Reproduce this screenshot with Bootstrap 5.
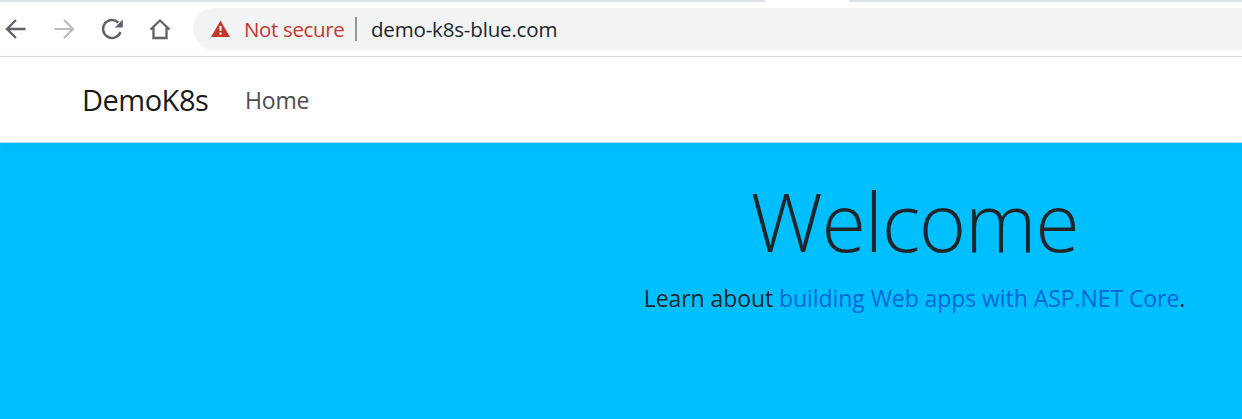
<!DOCTYPE html>
<html lang="en">
<head>
<meta charset="utf-8">
<meta name="viewport" content="width=device-width, initial-scale=1">
<title>Home - DemoK8s</title>
<link href="https://cdn.jsdelivr.net/npm/bootstrap@5.3.0/dist/css/bootstrap.min.css" rel="stylesheet">
<style>
body{font-family:"Open Sans","Noto Sans",sans-serif;background:#00bfff;height:419px;color:#212529}
.tab-strip{height:2px;background:#dee1e6}
.strip-left{width:765px;background:#dee1e6;border-bottom-right-radius:3px}
.strip-gap{width:84px;background:#fff}
.toolbar{height:55px;border-bottom:1px solid #d6d7d9;padding-left:4px}
.tool-icons{width:189px;padding-right:21px}
.address{height:42px;background:#f1f3f4;border-radius:21px 0 0 21px;font-size:20.5px;padding-left:17px;margin-top:-1px}
.address span{padding-top:1px}
.warn{color:#c5362c;margin-left:13px;width:101px;letter-spacing:-.35px}
.url{letter-spacing:-.17px}
.divider{width:2px;height:24px;background:#94979a;margin-left:10px;margin-right:14px}
.site-nav{height:86px;border-bottom:1px solid #a9e6fb;box-shadow:0 4px 12px rgba(0,0,0,.05);padding-left:82px}
.site-nav .navbar-brand{font-size:29px;color:#1a1a1a;width:131px;letter-spacing:-.5px;padding-top:1px!important}
.site-nav .nav-link{font-size:23px;color:#4d4d4d;padding-top:2px;letter-spacing:-.2px}
.page-main{padding-left:587px}
.welcome{font-size:81px;font-weight:300;line-height:98px;padding-top:29px;margin-bottom:10px;letter-spacing:-1.3px}
.learn{font-size:23px;line-height:36px;letter-spacing:-.07px}
.learn a{color:#0366d6}
</style>
</head>
<body class="overflow-hidden">
<div class="tab-strip d-flex"><div class="strip-left"></div><div class="strip-gap"></div></div>
<div class="toolbar bg-white d-flex align-items-center">
  <div class="tool-icons d-flex justify-content-between flex-shrink-0">
    <svg width="24" height="24" fill="none" stroke="#5f6368" stroke-width="2.3"><path d="M21.5 12H3.500M12 3L3 12l9 9"/></svg>
    <svg width="24" height="24" fill="none" stroke="#babcbe" stroke-width="2.2"><path d="M2.500 12h18M12 3l9 9-9 9"/></svg>
    <svg width="24" height="24" fill="none" stroke="#5f6368" stroke-width="2.4"><path d="M20.500 15A9 9 0 1 1 18.500 5.700"/><path d="M22.800 2.500v8h-8z" fill="#5f6368" stroke="none"/></svg>
    <svg width="24" height="24" fill="none" stroke="#5f6368" stroke-width="2.3"><path d="M2.500 12.500L12 3.500l9.500 9M5.500 10.500V21h13V10.500"/></svg>
  </div>
  <div class="address flex-grow-1 d-flex align-items-center">
    <svg width="21" height="18"><path d="M10.500 .5L20 17H1z" fill="#c5362c"/><path d="M10.500 6v5M10.500 12.500v2.200" stroke="#fff" stroke-width="2"/></svg>
    <span class="warn text-nowrap">Not secure</span>
    <span class="divider"></span>
    <span class="url">demo-k8s-blue.com</span>
  </div>
</div>
<nav class="site-nav navbar navbar-expand bg-white py-0">
  <a class="navbar-brand me-0 p-0" href="#">DemoK8s</a>
  <a class="nav-link ms-4 ps-2" href="#">Home</a>
</nav>
<main class="page-main text-center">
  <h1 class="welcome">Welcome</h1>
  <p class="learn mb-0">Learn about <a class="text-decoration-none" href="#">building Web apps with ASP.NET Core</a>.</p>
</main>
<script src="https://cdn.jsdelivr.net/npm/bootstrap@5.3.0/dist/js/bootstrap.bundle.min.js"></script>
</body>
</html>
